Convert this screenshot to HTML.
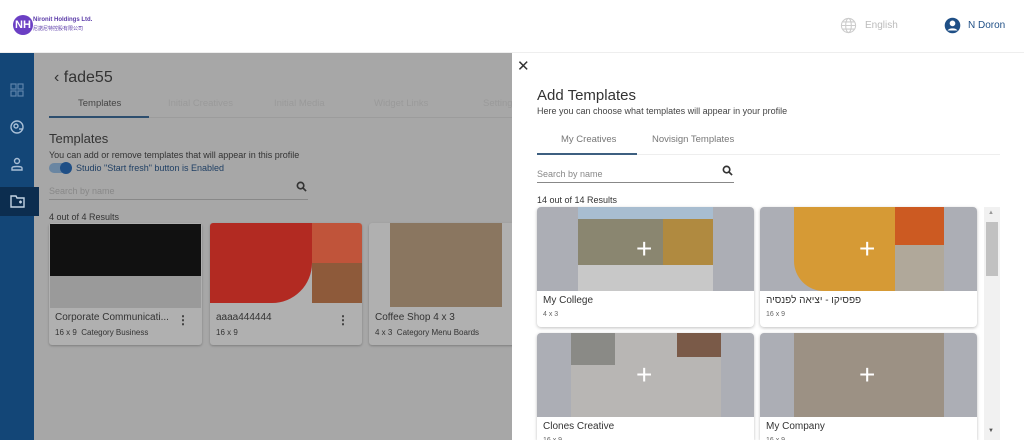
<!DOCTYPE html>
<html><head><meta charset="utf-8"><style>
*{margin:0;padding:0;box-sizing:border-box}
html,body{width:1024px;height:440px;overflow:hidden}
body{position:relative;background:#a7a7a7;font-family:"Liberation Sans","Noto Sans CJK SC",sans-serif;color:#333}
.a{position:absolute}
.hdr{left:0;top:0;width:1024px;height:53px;background:#fff;border-bottom:1px solid #eee}
.side{left:0;top:53px;width:34px;height:387px;background:#134677}
.t{position:absolute;white-space:nowrap}
.card{position:absolute;background:#b0b0b0;border-radius:3px;box-shadow:0 1px 2px rgba(0,0,0,.25);overflow:hidden}
.rc{position:absolute;background:#fff;border-radius:4px;box-shadow:0 1px 3px rgba(0,0,0,.25);overflow:hidden}
.img{position:absolute;left:0;top:0;right:0;height:84px;background:#acaeb5}
.plus{position:absolute;color:#fff;font-size:28px;font-weight:300;line-height:1}
</style></head><body>
<div class="a hdr">
 <div class="a" style="left:13px;top:15px;width:20px;height:20px;border-radius:50%;background:#6b3fc4;color:#fff;font-size:11px;font-weight:bold;text-align:center;line-height:20px">NH</div>
 <div class="t" style="left:33px;top:17px;font-size:6px;font-weight:bold;color:#5a3aa8">Nironit Holdings Ltd.</div>
 <div class="t" style="left:33px;top:25px;font-size:5px;color:#5a3aa8">尼諾尼特控股有限公司</div>
 <svg class="a" style="left:840px;top:17px" width="17" height="17" viewBox="0 0 24 24" fill="none" stroke="#ccc" stroke-width="1.5"><circle cx="12" cy="12" r="10"/><ellipse cx="12" cy="12" rx="4" ry="10"/><path d="M2 12h20M4 7h16M4 17h16"/></svg>
 <div class="t" style="left:865px;top:20px;font-size:10px;color:#bbb">English</div>
 <svg class="a" style="left:944px;top:17px" width="17" height="17" viewBox="0 0 24 24"><circle cx="12" cy="12" r="11" fill="#1f4f86"/><circle cx="12" cy="9" r="4" fill="#fff"/><path d="M5 19c2-4 12-4 14 0" fill="#fff"/></svg>
 <div class="t" style="left:968px;top:20px;font-size:10px;color:#1f4f86">N Doron</div>
</div>
<div class="a side">
 <svg class="a" style="left:10px;top:30px" width="14" height="14" viewBox="0 0 14 14" fill="none" stroke="#5f84aa" stroke-width="1.2"><rect x="1" y="1" width="5" height="5"/><rect x="8" y="1" width="5" height="5"/><rect x="1" y="8" width="5" height="5"/><rect x="8" y="8" width="5" height="5"/></svg>
 <svg class="a" style="left:10px;top:67px" width="14" height="14" viewBox="0 0 14 14" fill="none" stroke="#a9bfd6" stroke-width="1.4"><circle cx="7" cy="7" r="6"/><circle cx="6" cy="6" r="2"/><path d="M9 9h3"/></svg>
 <svg class="a" style="left:10px;top:104px" width="14" height="14" viewBox="0 0 14 14" fill="none" stroke="#a9bfd6" stroke-width="1.4"><circle cx="7" cy="4" r="2.5"/><path d="M2 13v-2c0-2 10-2 10 0v2z"/></svg>
 <div class="a" style="left:0;top:134px;width:39px;height:29px;background:#0c2d4f"></div>
 <svg class="a" style="left:10px;top:141px" width="15" height="14" viewBox="0 0 15 14" fill="none" stroke="#c4d4e4" stroke-width="1.4"><path d="M1 2h5l1 2h7v9H1z"/><path d="M9 8h3M10.5 6.5v3"/></svg>
</div>
<div class="t" style="left:54px;top:69px;font-size:16px;color:#333">‹&nbsp;fade55</div>
<div class="t" style="left:78px;top:98px;font-size:9.5px;color:#444">Templates</div>
<div class="t" style="left:168px;top:98px;font-size:9.5px;color:#9a9a9a">Initial Creatives</div>
<div class="t" style="left:274px;top:98px;font-size:9.5px;color:#9a9a9a">Initial Media</div>
<div class="t" style="left:374px;top:98px;font-size:9.5px;color:#9a9a9a">Widget Links</div>
<div class="t" style="left:483px;top:98px;font-size:9.5px;color:#9a9a9a">Settings</div>
<div class="a" style="left:49px;top:117px;width:463px;height:1px;background:#9c9c9c"></div>
<div class="a" style="left:49px;top:116px;width:100px;height:2px;background:#2d4e6e"></div>
<div class="t" style="left:49px;top:131px;font-size:13px;color:#333">Templates</div>
<div class="t" style="left:49px;top:150px;font-size:9px;color:#333">You can add or remove templates that will appear in this profile</div>
<div class="a" style="left:49px;top:163px;width:22px;height:10px;border-radius:5px;background:#6a86a2"></div>
<div class="a" style="left:60px;top:162px;width:12px;height:12px;border-radius:50%;background:#1f4f86"></div>
<div class="t" style="left:76px;top:163px;font-size:9px;color:#1f3f64">Studio "Start fresh" button is Enabled</div>
<div class="t" style="left:49px;top:186px;font-size:9px;color:#888">Search by name</div>
<svg class="a" style="left:296px;top:181px" width="11" height="11" viewBox="0 0 12 12" fill="none" stroke="#333" stroke-width="1.8"><circle cx="5" cy="5" r="3.5"/><path d="M7.5 7.5L11 11"/></svg>
<div class="a" style="left:49px;top:199px;width:259px;height:1px;background:#888"></div>
<div class="t" style="left:49px;top:212px;font-size:9px;color:#333">4 out of 4 Results</div>

<div class="card" style="left:49px;top:223px;width:153px;height:122px">
 <div class="a" style="left:1px;top:1px;width:151px;height:52px;background:#111"></div>
 <div class="a" style="left:1px;top:53px;width:151px;height:32px;background:#9a9a9a"></div>
 <div class="t" style="left:6px;top:89px;font-size:10px;color:#333">Corporate Communicati...</div>
 <div class="t" style="left:6px;top:105px;font-size:8px;color:#333">16 x 9 &nbsp;Category Business</div>
 <div class="t" style="left:128px;top:90px;font-size:12px;font-weight:bold;color:#333">⋮</div>
</div>
<div class="card" style="left:210px;top:223px;width:152px;height:122px">
 <div class="a" style="left:0;top:0;width:102px;height:80px;background:#b22a22;border-radius:0 0 40px 0"></div>
 <div class="a" style="left:102px;top:0;width:50px;height:40px;background:#c0543a"></div>
 <div class="a" style="left:102px;top:40px;width:50px;height:40px;background:#8e5a3a"></div>
 <div class="t" style="left:6px;top:89px;font-size:10px;color:#333">aaaa444444</div>
 <div class="t" style="left:6px;top:105px;font-size:8px;color:#333">16 x 9</div>
 <div class="t" style="left:127px;top:90px;font-size:12px;font-weight:bold;color:#333">⋮</div>
</div>
<div class="card" style="left:369px;top:223px;width:150px;height:122px">
 <div class="a" style="left:21px;top:0;width:112px;height:84px;background:#8a7660"></div>
 <div class="t" style="left:6px;top:89px;font-size:10px;color:#333">Coffee Shop 4 x 3</div>
 <div class="t" style="left:6px;top:105px;font-size:8px;color:#333">4 x 3 &nbsp;Category Menu Boards</div>
</div>

<div class="a" style="left:512px;top:53px;width:512px;height:387px;background:#fff"></div>
<div class="t" style="left:517px;top:57px;font-size:15px;color:#333">✕</div>
<div class="t" style="left:537px;top:87px;font-size:15px;color:#333">Add Templates</div>
<div class="t" style="left:537px;top:106px;font-size:9px;color:#444">Here you can choose what templates will appear in your profile</div>
<div class="t" style="left:561px;top:134px;font-size:9.5px;color:#777">My Creatives</div>
<div class="t" style="left:652px;top:134px;font-size:9.5px;color:#777">Novisign Templates</div>
<div class="a" style="left:537px;top:154px;width:463px;height:1px;background:#eee"></div>
<div class="a" style="left:537px;top:153px;width:100px;height:2px;background:#3d5f80"></div>
<div class="t" style="left:537px;top:169px;font-size:9px;color:#888">Search by name</div>
<svg class="a" style="left:722px;top:165px" width="11" height="11" viewBox="0 0 12 12" fill="none" stroke="#333" stroke-width="1.8"><circle cx="5" cy="5" r="3.5"/><path d="M7.5 7.5L11 11"/></svg>
<div class="a" style="left:537px;top:182px;width:197px;height:1px;background:#888"></div>
<div class="t" style="left:537px;top:195px;font-size:9px;color:#333">14 out of 14 Results</div>

<div class="rc" style="left:537px;top:207px;width:217px;height:120px">
 <div class="img"><div class="a" style="left:41px;top:0;width:135px;height:84px;background:#8a8670"></div><div class="a" style="left:41px;top:0;width:135px;height:12px;background:#a8bdd0"></div><div class="a" style="left:126px;top:12px;width:50px;height:46px;background:#b08a40"></div><div class="a" style="left:41px;top:58px;width:135px;height:26px;background:#c8c8c8"></div><div class="plus" style="left:99px;top:28px">+</div></div>
 <div class="t" style="left:6px;top:88px;font-size:10px;color:#333">My College</div>
 <div class="t" style="left:6px;top:104px;font-size:7px;color:#666">4 x 3</div>
</div>
<div class="rc" style="left:760px;top:207px;width:217px;height:120px">
 <div class="img"><div class="a" style="left:34px;top:0;width:150px;height:84px;background:#d69a35;border-radius:0 0 0 30px"></div><div class="a" style="left:135px;top:0;width:49px;height:38px;background:#cc5a22"></div><div class="a" style="left:135px;top:38px;width:49px;height:46px;background:#b0a89a"></div><div class="plus" style="left:99px;top:28px">+</div></div>
 <div class="t" style="left:6px;top:88px;font-size:10px;color:#333" dir="rtl">פפסיקו - יציאה לפנסיה</div>
 <div class="t" style="left:6px;top:104px;font-size:7px;color:#666">16 x 9</div>
</div>
<div class="rc" style="left:537px;top:333px;width:217px;height:107px;border-radius:4px 4px 0 0">
 <div class="img"><div class="a" style="left:34px;top:0;width:150px;height:84px;background:#b8b6b4"></div><div class="a" style="left:140px;top:0;width:44px;height:24px;background:#7a5a48"></div><div class="a" style="left:34px;top:0;width:44px;height:32px;background:#8a8a86"></div><div class="plus" style="left:99px;top:28px">+</div></div>
 <div class="t" style="left:6px;top:88px;font-size:10px;color:#333">Clones Creative</div>
 <div class="t" style="left:6px;top:104px;font-size:7px;color:#666">16 x 9</div>
</div>
<div class="rc" style="left:760px;top:333px;width:217px;height:107px;border-radius:4px 4px 0 0">
 <div class="img"><div class="a" style="left:34px;top:0;width:150px;height:84px;background:#9c9184"></div><div class="plus" style="left:99px;top:28px">+</div></div>
 <div class="t" style="left:6px;top:88px;font-size:10px;color:#333">My Company</div>
 <div class="t" style="left:6px;top:104px;font-size:7px;color:#666">16 x 9</div>
</div>
<div class="a" style="left:984px;top:207px;width:16px;height:233px;background:#f1f1f1"></div>
<div class="a" style="left:986px;top:222px;width:12px;height:54px;background:#c1c1c1"></div>
<div class="t" style="left:988px;top:210px;font-size:6px;color:#999">▲</div>
<div class="t" style="left:988px;top:428px;font-size:6px;color:#555">▼</div>
</body></html>
